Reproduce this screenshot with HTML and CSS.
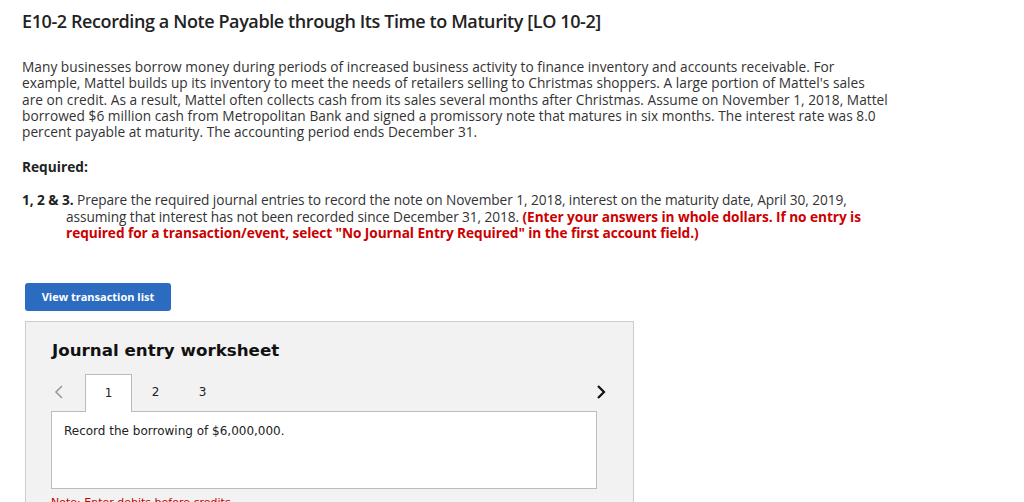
FILE: index.html
```html
<!DOCTYPE html>
<html>
<head>
<meta charset="utf-8">
<link rel="stylesheet" href="styles.css">
</head>
<body>
<div class="page">
  <h1 class="title">E10-2 Recording a Note Payable through Its Time to Maturity [LO 10-2]</h1>
  <p class="para">Many businesses borrow money during periods of increased business activity to finance inventory and accounts receivable. For<br>example, Mattel builds up its inventory to meet the needs of retailers selling to Christmas shoppers. A large portion of Mattel's sales<br>are on credit. As a result, Mattel often collects cash from its sales several months after Christmas. Assume on November 1, 2018, Mattel<br>borrowed $6 million cash from Metropolitan Bank and signed a promissory note that matures in six months. The interest rate was 8.0<br>percent payable at maturity. The accounting period ends December 31.</p>
  <p class="req">Required:</p>
  <p class="task"><b>1, 2 &amp; 3.</b> Prepare the required journal entries to record the note on November 1, 2018, interest on the maturity date, April 30, 2019,<br>assuming that interest has not been recorded since December 31, 2018. <span class="warn">(Enter your answers in whole dollars. If no entry is<br>required for a transaction/event, select "No Journal Entry Required" in the first account field.)</span></p>
  <button class="btn">View transaction list</button>
  <div class="sheet">
    <h2 class="sheet-title">Journal entry worksheet</h2>
    <div class="tabs">
      <span class="nav prev"><svg width="12" height="16" viewBox="0 0 12 16"><path d="M9 2 L3 8 L9 14" fill="none" stroke="#9a9a9a" stroke-width="1.6"/></svg></span>
      <span class="tab active">1</span>
      <span class="tab">2</span>
      <span class="tab">3</span>
      <span class="spacer"></span>
      <span class="nav next"><svg width="12" height="16" viewBox="0 0 12 16"><path d="M3 2 L9 8 L3 14" fill="none" stroke="#111" stroke-width="2.2"/></svg></span>
    </div>
    <div class="entry">Record the borrowing of $6,000,000.</div>
    <p class="note">Note: Enter debits before credits.</p>
  </div>
</div>
</body>
</html>
```
FILE: styles.css
```css
html, body { margin: 0; padding: 0; background: #fff; }
body { font-family: "Open Sans", "Liberation Sans", sans-serif; color: #333; }
.page { padding: 10px 0 0 22px; width: 940px; }
.title { margin: 0; font-size: 18px; font-weight: 600; color: #222; line-height: 22px; letter-spacing: -0.4px; }
.para { margin: 27px 0 0; font-size: 13.7px; line-height: 16.25px; white-space: nowrap; letter-spacing: 0.03px; }
.req { margin: 19px 0 0; font-size: 13.7px; font-weight: 700; line-height: 16px; color: #222; }
.task { margin: 17px 0 0; font-size: 13.7px; line-height: 16.5px; padding-left: 44px; text-indent: -44px; white-space: nowrap; letter-spacing: -0.08px; }
.task b { color: #222; }
.warn { color: #c00; font-weight: 700; }
.btn { display: block; margin: 41px 0 0 3px; width: 146px; height: 28px; border: 0; border-radius: 3px; background: #2c6cc0; color: #fff; font-family: "Open Sans", "Liberation Sans", sans-serif; font-size: 11px; font-weight: 700; padding: 0; }
.sheet { margin: 10px 0 0 3px; width: 582px; height: 200px; background: #f2f2f2; border: 1px solid #ccc; padding: 0 0 0 25px; font-family: Verdana, "DejaVu Sans", sans-serif; color: #222; }
.sheet-title { margin: 17px 0 0 1px; font-size: 16.7px; font-weight: 700; line-height: 22px; color: #111; }
.tabs { display: flex; align-items: flex-end; margin-top: 13px; width: 556px; height: 37px; }
.nav { display: flex; align-items: center; height: 37px; }
.prev { width: 34px; padding-left: 2px; box-sizing: border-box; }
.tab { width: 47px; height: 37px; display: flex; align-items: center; justify-content: center; font-size: 12px; box-sizing: border-box; }
.tab.active { background: #fff; border: 1px solid #bbb; border-bottom: 0; position: relative; margin-bottom: -1px; height: 38px; }
.spacer { flex: 1; }
.entry { width: 532px; height: 64px; background: #fff; border: 1px solid #bbb; padding: 12px 0 0 12px; font-size: 12px; color: #222; }
.note { margin: 7px 0 0; font-size: 11px; color: #c00; }
```
